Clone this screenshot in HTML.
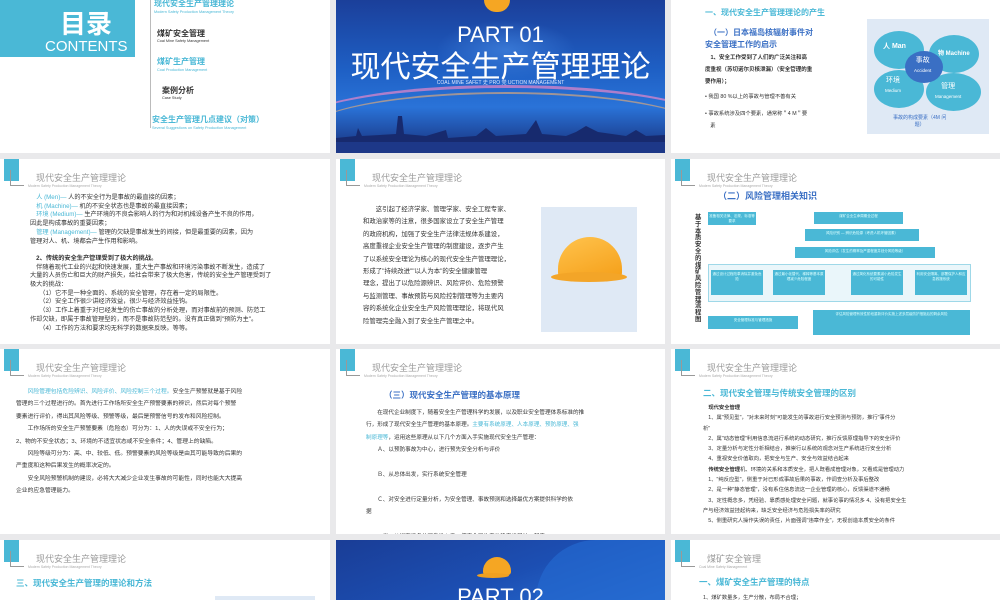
<!DOCTYPE html>
<html><head><meta charset="utf-8"><style>
*{margin:0;padding:0;box-sizing:border-box}
body{width:1000px;height:600px;background:#e9e9eb;position:relative;overflow:hidden;font-family:"Liberation Sans","Noto Sans CJK SC",sans-serif;color:#333}
.c{position:absolute;background:#fff;overflow:hidden}
.a{position:absolute;white-space:nowrap}
.hb{position:absolute;left:4px;top:0;width:15px;height:22px;background:#4ab8d6}
.ho{position:absolute;left:10px;top:11px;width:14px;height:16px;border:1px solid #999;border-top:none;border-right:none}
.ht{position:absolute;left:36px;top:12px;font-size:9px;color:#9a9a9a}
.hs{position:absolute;left:28px;top:25px;font-size:3.5px;color:#aaa}
.t{font-size:6.3px;line-height:12.5px;color:#333}
.blue{color:#4ab8d6}
.dk{background:linear-gradient(180deg,#1b3f9a 0%,#1e5fc4 45%,#2a73d8 70%,#172e78 100%)}
.box{position:absolute;background:#4ab8d6;color:#dff;font-size:3.5px;text-align:center;line-height:5px;padding-top:2px}
</style></head><body>

<!-- Row1 col1 -->
<div class="c" style="left:0;top:0;width:330px;height:153px">
<div class="a" style="left:0;top:0;width:135px;height:57px;background:#4ab8d6"></div>
<div class="a" style="left:60px;top:4px;font-size:26px;font-weight:bold;color:#fff">目录</div>
<div class="a" style="left:45px;top:38px;font-size:15px;color:#fff">CONTENTS</div>
<div class="a" style="left:150px;top:0;width:1px;height:128px;background:#bbb"></div>
<div class="a" style="left:154px;top:-2px;font-size:8px;color:#4ab8d6;font-weight:bold">现代安全生产管理理论</div>
<div class="a" style="left:154px;top:10px;font-size:3.8px;color:#4ab8d6">Modern Safety Production Management Theory</div>
<div class="a" style="left:157px;top:28px;font-size:8px;color:#333;font-weight:bold">煤矿安全管理</div>
<div class="a" style="left:157px;top:39px;font-size:3.8px;color:#333">Coal Mine Safety Management</div>
<div class="a" style="left:157px;top:56px;font-size:8px;color:#4ab8d6;font-weight:bold">煤矿生产管理</div>
<div class="a" style="left:157px;top:68px;font-size:3.8px;color:#4ab8d6">Coal Production Management</div>
<div class="a" style="left:162px;top:85px;font-size:8px;color:#333;font-weight:bold">案例分析</div>
<div class="a" style="left:162px;top:96px;font-size:3.8px;color:#333">Case Study</div>
<div class="a" style="left:152px;top:114px;font-size:8px;color:#4ab8d6;font-weight:bold">安全生产管理几点建议（对策）</div>
<div class="a" style="left:152px;top:126px;font-size:3.8px;color:#4ab8d6">Several Suggestions on Safety Production Management</div>
</div>

<!-- Row1 col2 -->
<div class="c dk" style="left:336px;top:0;width:329px;height:153px">
<div class="a" style="left:100px;top:20px;width:140px;height:60px;border-radius:50%;background:radial-gradient(#4a8ee8,transparent 70%);opacity:.6"></div>
<div class="a" style="left:-40px;top:85px;width:420px;height:80px;border-radius:50%;border-top:3px solid #e887c9;opacity:.7"></div>
<div class="a" style="left:-30px;top:92px;width:400px;height:80px;border-radius:50%;border-top:2px solid #f2b070;opacity:.6"></div>
<div class="a" style="left:148px;top:0;width:26px;height:12px;border-radius:0 0 13px 13px;background:#f5a623"></div>
<div class="a" style="left:0;top:22px;width:329px;text-align:center;font-size:22px;color:#fff">PART 01</div>
<div class="a" style="left:0;top:42px;width:329px;text-align:center;font-size:30px;color:#fff">现代安全生产管理理论</div>
<div class="a" style="left:0;top:79px;width:329px;text-align:center;font-size:5px;color:#dfe8ff">COAL MINE SAFET 史 PRO 党 UCTION MANAGEMENT</div>
<svg class="a" style="left:0;top:80px" width="329" height="73"><path d="M0 58 L20 56 L22 48 L26 56 L60 54 L62 36 L66 36 L68 54 L90 56 L110 50 L112 58 L140 56 L150 48 L160 56 L190 54 L200 40 L206 54 L230 56 L240 52 L250 46 L262 52 L290 56 L300 50 L310 56 L329 55 L329 73 L0 73Z" fill="#172a6e"/><rect x="0" y="62" width="329" height="11" fill="#1f3c8f" opacity=".8"/></svg>
</div>

<!-- Row1 col3 -->
<div class="c" style="left:671px;top:0;width:329px;height:153px">
<div class="a" style="left:34px;top:7px;font-size:8px;color:#4ab8d6;font-weight:bold">一、现代安全生产管理理论的产生</div>
<div class="a" style="left:34px;top:27px;font-size:8px;color:#3a6fc4;font-weight:bold;line-height:12px">　（一）日本福岛核辐射事件对<br>安全管理工作的启示</div>
<div class="a t" style="left:34px;top:52px;font-size:5.5px;font-weight:bold;line-height:12px">　1、安全工作受到了人们的广泛关注和高<br>度重视（苏切诺尔贝核泄漏）（安全管理的重<br>要作用）；</div>
<div class="a" style="left:34px;top:92px;font-size:5.3px">• 我国 80 %以上的事故与管理不善有关</div>
<div class="a" style="left:34px;top:108px;font-size:5.3px;line-height:12px">• 事故系统涉及四个要素，通常称＂4 M＂要<br>　素</div>
<div class="a" style="left:196px;top:19px;width:122px;height:115px;background:#dfe9f5"></div>
<div class="a" style="left:203px;top:31px;width:50px;height:38px;border-radius:50%;background:#4ab8d6"></div>
<div class="a" style="left:258px;top:35px;width:50px;height:38px;border-radius:50%;background:#4ab8d6"></div>
<div class="a" style="left:203px;top:70px;width:50px;height:38px;border-radius:50%;background:#4ab8d6"></div>
<div class="a" style="left:255px;top:73px;width:55px;height:38px;border-radius:50%;background:#4ab8d6"></div>
<div class="a" style="left:234px;top:51px;width:38px;height:32px;border-radius:50%;background:#3a6fc4"></div>
<div class="a" style="left:212px;top:41px;font-size:7px;color:#fff;font-weight:bold">人 Man</div>
<div class="a" style="left:267px;top:48px;font-size:6px;color:#fff;font-weight:bold">物 Machine</div>
<div class="a" style="left:243px;top:56px;font-size:7px;color:#fff;text-align:center;line-height:10px">事故<br><span style="font-size:4.5px">Accident</span></div>
<div class="a" style="left:214px;top:76px;font-size:7px;color:#fff;text-align:center;line-height:10px">环境<br><span style="font-size:4.5px">Medium</span></div>
<div class="a" style="left:264px;top:82px;font-size:7px;color:#fff;text-align:center;line-height:10px">管理<br><span style="font-size:4.5px">Management</span></div>
<div class="a" style="left:222px;top:115px;font-size:5px;color:#3a6fc4;text-align:center;line-height:7px">事故的构成要素（4M 问<br>题）</div>
</div>

<!-- Row2 col1 -->
<div class="c" style="left:0;top:159px;width:330px;height:185px">
<div class="hb"></div><div class="ho"></div><div class="ht">现代安全生产管理理论</div><div class="hs">Modern Safety Production Management Theory</div>
<div class="a t" style="left:30px;top:35px;font-size:6.2px;line-height:8.7px">
　<span class="blue">人 (Men)—</span> 人的不安全行为是事故的最直接的因素；<br>
　<span class="blue">机 (Machine)—</span> 机的不安全状态也是事故的最直接因素；<br>
　<span class="blue">环境 (Medium)—</span> 生产环境的不良会影响人的行为和对机械设备产生不良的作用，<br>
因此是构成事故的重要因素；<br>
　<span class="blue">管理 (Management)—</span> 管理的欠缺是事故发生的间接，但是最重要的因素，因为<br>
管理对人、机、境都会产生作用和影响。<br><br>
<b>　2、传统的安全生产管理受到了极大的挑战。</b><br>
　伴随着现代工业的兴起和快速发展，重大生产事故和环境污染事故不断发生，造成了<br>
大量的人员伤亡和巨大的财产损失，给社会带来了极大危害，传统的安全生产管理受到了<br>
极大的挑战：<br>
　　（1）它不是一种全面的、系统的安全管理，存在着一定的局限性。<br>
　　（2）安全工作很少讲经济效益，很少与经济效益挂钩。<br>
　　（3）工作上着重于对已经发生的伤亡事故的分析处理，而对事故前的预测、防范工<br>
作却欠缺，即属于事故管理型的，而不是事故防范型的。没有真正做到"预防为主"。<br>
　　（4）工作的方法和要求均无科学的数据来反映。等等。</div>
</div>

<!-- Row2 col2 -->
<div class="c" style="left:336px;top:159px;width:329px;height:185px">
<div class="hb"></div><div class="ho"></div><div class="ht">现代安全生产管理理论</div><div class="hs">Modern Safety Production Management Theory</div>
<div class="a t" style="left:27px;top:45px;font-size:6.4px;line-height:12.4px">
　　这引起了经济学家、管理学家、安全工程专家、<br>和政治家等的注意，很多国家设立了安全生产管理<br>的政府机构，加强了安全生产法律法规体系建设，<br>高度重视企业安全生产管理的制度建设，逐步产生<br>了以系统安全理论为核心的现代安全生产管理理论，<br>形成了"持续改进""以人为本"的安全健康管理<br>理念，提出了以危险源辨识、风险评价、危险预警<br>与监测管理、事故预防与风险控制管理等为主要内<br>容的系统化企业安全生产风险管理理论，将现代风<br>险管理完全融入到了安全生产管理之中。</div>
<div class="a" style="left:205px;top:48px;width:96px;height:125px;background:#dfe9f5"></div>
<div class="a" style="left:222px;top:78px;width:64px;height:40px;border-radius:32px 32px 4px 4px;background:linear-gradient(160deg,#ffc34d,#f5a01a)"></div>
<div class="a" style="left:215px;top:113px;width:76px;height:10px;border-radius:50%;background:#f3a528"></div>
</div>

<!-- Row2 col3 -->
<div class="c" style="left:671px;top:159px;width:329px;height:185px">
<div class="hb"></div><div class="ho"></div><div class="ht">现代安全生产管理理论</div><div class="hs">Modern Safety Production Management Theory</div>
<div class="a" style="left:47px;top:30px;font-size:9px;color:#3a6fc4;font-weight:bold">（二）风险管理相关知识</div>
<div class="a" style="left:24px;top:56px;width:8px;font-size:6.3px;font-weight:bold;line-height:6.8px;white-space:normal">基于本质安全的煤矿风险管理流程图</div>
<div class="box" style="left:37px;top:53px;width:48px;height:13px">准备相关法律、法规、标准等要求</div>
<div class="box" style="left:143px;top:53px;width:89px;height:12px">煤矿企业生命周期全过程</div>
<div class="box" style="left:134px;top:70px;width:114px;height:12px">风险识别 — 辨识危险源（考虑人机环管因素）</div>
<div class="box" style="left:124px;top:88px;width:140px;height:11px">风险评估（发生的概率及严重程度并划分风险等级）</div>
<div class="a" style="left:37px;top:105px;width:263px;height:38px;border:1px solid #9fd8e8;background:#eaf6fa"></div>
<div class="box" style="left:40px;top:111px;width:52px;height:25px">通过设计过程改革消除并避免危险</div>
<div class="box" style="left:102px;top:111px;width:52px;height:25px">通过最小化替代、稀释等基本原理减少危险程度</div>
<div class="box" style="left:180px;top:111px;width:52px;height:25px">通过简化系统要素减小危险发生的可能性</div>
<div class="box" style="left:244px;top:111px;width:52px;height:25px">利用安全隔离、部署保护人和应急救援系统</div>
<div class="box" style="left:37px;top:157px;width:90px;height:13px">安全管理标准与管理措施</div>
<div class="box" style="left:142px;top:151px;width:157px;height:25px">评估风险管理有效性阶段重新评价实施上述多层级防护措施后的剩余风险</div>
</div>

<!-- Row3 col1 -->
<div class="c" style="left:0;top:349px;width:330px;height:185px">
<div class="hb"></div><div class="ho"></div><div class="ht">现代安全生产管理理论</div><div class="hs">Modern Safety Production Management Theory</div>
<div class="a t" style="left:16px;top:37px;font-size:5.8px;line-height:12.4px">
　　<span class="blue">风险管理包括危险辨识、风险评价、风险控制三个过程。</span>安全生产预警就是基于风险<br>
管理的三个过程进行的。首先进行工作场所安全生产预警要素的辨识，然后对每个预警<br>
要素进行评价，得出其风险等级、预警等级，最后是预警信号的发布和风险控制。<br>
　　工作场所的安全生产预警要素（危险态）可分为：1、人的失误或不安全行为；<br>
2、物的不安全状态；3、环境的不适宜状态或不安全条件；4、管理上的缺陷。<br>
　　风险等级可分为：高、中、较低、低。预警要素的风险等级是由其可能导致的后果的<br>
严重度和这种后果发生的概率决定的。<br>
　　安全风险预警机制的建设，必将大大减少企业发生事故的可能性，同时也能大大提高<br>
企业的应急管理能力。</div>
</div>

<!-- Row3 col2 -->
<div class="c" style="left:336px;top:349px;width:329px;height:185px">
<div class="hb"></div><div class="ho"></div><div class="ht">现代安全生产管理理论</div><div class="hs">Modern Safety Production Management Theory</div>
<div class="a" style="left:48px;top:40px;font-size:8.5px;color:#3a6fc4;font-weight:bold">（三）现代安全生产管理的基本原理</div>
<div class="a t" style="left:30px;top:58px;font-size:5.6px;line-height:12.4px">
　　在现代企业制度下，随着安全生产管理科学的发展，以及职业安全管理体系标准的推<br>
行，形成了现代安全生产管理的基本原理。<span class="blue">主要有系统原理、人本原理、预防原理、强<br>
制原理等</span>，运用这些原理从以下几个方面入手实施现代安全生产管理：<br>
　　Ａ、以预防事故为中心，进行预先安全分析与评价<br><br>
　　Ｂ、从总体出发，实行系统安全管理<br><br>
　　Ｃ、对安全进行定量分析，为安全管理、事故预测和选择最优方案提供科学的依<br>
据<br><br>
　　　觉，从提高设备的可靠性入手，把安全同生产的稳定发展统一起来</div>
</div>

<!-- Row3 col3 -->
<div class="c" style="left:671px;top:349px;width:329px;height:185px">
<div class="hb"></div><div class="ho"></div><div class="ht">现代安全生产管理理论</div><div class="hs">Modern Safety Production Management Theory</div>
<div class="a" style="left:32px;top:38px;font-size:8.5px;color:#4ab8d6;font-weight:bold">二、现代安全管理与传统安全管理的区别</div>
<div class="a t" style="left:32px;top:54px;font-size:5.3px;line-height:10.3px">
　<b>现代安全管理</b><br>
　1、属"预见型"，"对未来时刻"可能发生的事故进行安全预测与预防，推行"事件分<br>析"<br>
　2、属"动态管理"利用信息流进行系统的动态研究，推行反馈原理指导下的安全评价<br>
　3、定量分析与定性分析相结合，推崇行以系统的观念对生产系统进行安全分析<br>
　4、重视安全价值取向，把安全与生产、安全与效益结合起来<br>
　<b>传统安全管理</b>机、环境的关系和本质安全，把人既看成管理对象，又看成是管理动力<br>
　1、"纯反应型"，侧重于对已形成事故后果的事故，作调查分析及事后整改<br>
　2、是一种"静态管理"，没有系住信息流这一企业管理的核心，反馈渠道不通畅<br>
　3、定性概念多，凭经验、靠质感处理安全问题，就事论事的情况多 4、没有把安全生<br>产与经济效益挂起钩来，缺乏安全经济与危险损失率的研究<br>
　5、侧重研究人操作失误的责任，片面强调"违章作业"，无视创造本质安全的条件</div>
</div>

<!-- Row4 col1 -->
<div class="c" style="left:0;top:540px;width:330px;height:60px">
<div class="hb"></div><div class="ho"></div><div class="ht">现代安全生产管理理论</div><div class="hs">Modern Safety Production Management Theory</div>
<div class="a" style="left:16px;top:37px;font-size:8.5px;color:#4ab8d6;font-weight:bold">三、现代安全生产管理的理论和方法</div>
<div class="a" style="left:215px;top:56px;width:100px;height:10px;background:#dfe9f5"></div>
</div>

<!-- Row4 col2 -->
<div class="c" style="left:336px;top:540px;width:329px;height:60px;background:linear-gradient(160deg,#1a3d96,#1c4fb3 55%,#2a72d6)">
<div class="a" style="left:200px;top:0;width:140px;height:60px;border-radius:60px 0 0 0;background:#2368cf;opacity:.7"></div>
<div class="a" style="left:147px;top:17px;width:28px;height:18px;border-radius:14px 14px 3px 3px;background:#f5a623"></div>
<div class="a" style="left:141px;top:33px;width:32px;height:5px;border-radius:50%;background:#f0a020"></div>
<div class="a" style="left:0;top:44px;width:329px;text-align:center;font-size:22px;color:#fff">PART 02</div>
</div>

<!-- Row4 col3 -->
<div class="c" style="left:671px;top:540px;width:329px;height:60px">
<div class="hb"></div><div class="ho"></div><div class="ht" style="left:36px">煤矿安全管理</div><div class="hs" style="left:28px">Coal Mine Safety Management</div>
<div class="a" style="left:28px;top:36px;font-size:8.5px;color:#4ab8d6;font-weight:bold">一、煤矿安全生产管理的特点</div>
<div class="a" style="left:32px;top:53px;font-size:5.3px">1、煤矿数量多，生产分散，布局不合理；</div>
</div>

</body></html>
